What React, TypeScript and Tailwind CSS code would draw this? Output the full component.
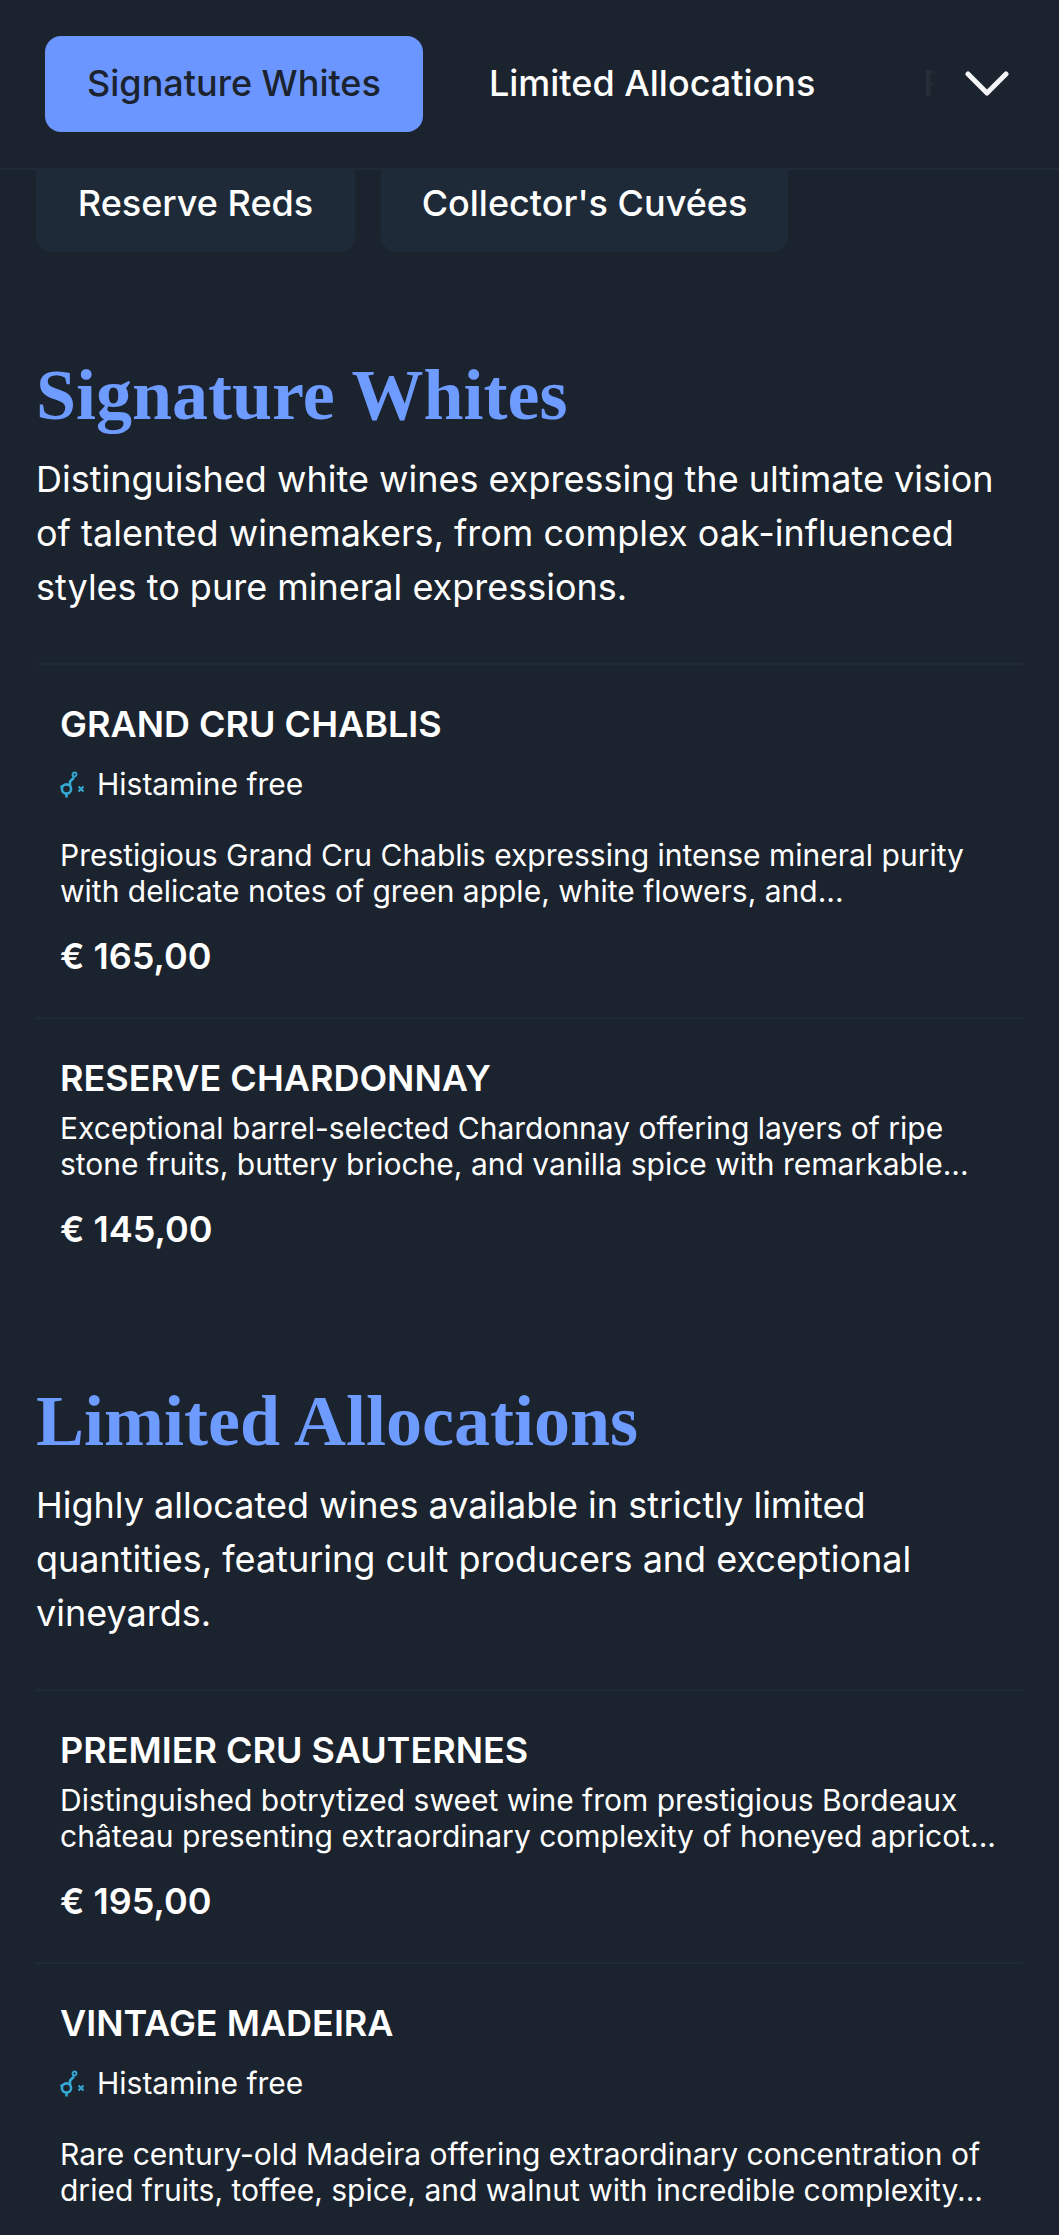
const TABS = ["Signature Whites", "Limited Allocations", "Reserve Reds"];

interface Wine {
  name: string;
  histamine?: boolean;
  description: string[];
  price?: string;
}

interface Section {
  title: string;
  intro: string[];
  wines: Wine[];
}

const SECTIONS: Section[] = [
  {
    title: "Signature Whites",
    intro: [
      "Distinguished white wines expressing the ultimate vision",
      "of talented winemakers, from complex oak-influenced",
      "styles to pure mineral expressions.",
    ],
    wines: [
      {
        name: "GRAND CRU CHABLIS",
        histamine: true,
        description: [
          "Prestigious Grand Cru Chablis expressing intense mineral purity",
          "with delicate notes of green apple, white flowers, and...",
        ],
        price: "€ 165,00",
      },
      {
        name: "RESERVE CHARDONNAY",
        description: [
          "Exceptional barrel-selected Chardonnay offering layers of ripe",
          "stone fruits, buttery brioche, and vanilla spice with remarkable...",
        ],
        price: "€ 145,00",
      },
    ],
  },
  {
    title: "Limited Allocations",
    intro: [
      "Highly allocated wines available in strictly limited",
      "quantities, featuring cult producers and exceptional",
      "vineyards.",
    ],
    wines: [
      {
        name: "PREMIER CRU SAUTERNES",
        description: [
          "Distinguished botrytized sweet wine from prestigious Bordeaux",
          "château presenting extraordinary complexity of honeyed apricot...",
        ],
        price: "€ 195,00",
      },
      {
        name: "VINTAGE MADEIRA",
        histamine: true,
        description: [
          "Rare century-old Madeira offering extraordinary concentration of",
          "dried fruits, toffee, spice, and walnut with incredible complexity...",
        ],
      },
    ],
  },
];

function HistamineIcon() {
  return (
    <svg viewBox="0 0 24 27" className="h-[27px] w-[24px] shrink-0" fill="none" stroke="#35a9d4" strokeWidth="2.6">
      <circle cx="6.5" cy="18" r="4.6" />
      <path d="M6.5 22.5V26.5M2 16l-1.5-1M10 15V10.5l4-4" />
      <circle cx="14.5" cy="3.5" r="2" strokeWidth="1.8" />
      <path d="M18.5 15.5l5 5M23.5 15.5l-5 5" strokeWidth="2" />
    </svg>
  );
}

function WineRow({ wine }: { wine: Wine }) {
  return (
    <div className="border-t-2 border-[#1e2a38] px-6 pt-[37px] pb-[39px]">
      <h3 className="text-[36px] leading-[44px] font-semibold text-white">{wine.name}</h3>
      {wine.histamine ? (
        <div className="mt-[16px] mb-[31px] flex items-center gap-[13px] text-[30px] leading-[44px] text-white">
          <HistamineIcon />
          Histamine free
        </div>
      ) : (
        <div className="h-[10px]" />
      )}
      <p className="text-[30px] leading-[36px] text-white">
        {wine.description.map((line) => (
          <span key={line} className="block whitespace-nowrap">
            {line}
          </span>
        ))}
      </p>
      {wine.price && <p className="mt-[25px] text-[36px] leading-[44px] font-semibold text-white">{wine.price}</p>}
    </div>
  );
}

export default function App() {
  return (
    <div className="h-[2235px] w-[1059px] overflow-hidden bg-[#1b232e] font-['Inter',sans-serif]">
      {/* Sticky category bar */}
      <div className="relative z-10 flex h-[170px] items-center border-b-2 border-[#1e2a38] bg-[#1b232e] pl-[45px]">
        <div className="relative flex w-[905px] gap-[24px] overflow-hidden">
          {TABS.map((tab, i) => (
            <span
              key={tab}
              className={`flex h-[96px] shrink-0 items-center rounded-[16px] px-[42px] pb-[2px] text-[36px] font-medium whitespace-nowrap ${
                i === 0 ? "bg-[#6c96ff] text-[#1b232e]" : "text-white"
              }`}
            >
              {tab}
            </span>
          ))}
          <div className="absolute inset-y-0 right-0 w-[50px] bg-gradient-to-r from-[#1b232e]/80 to-[#1b232e] to-75%" />
        </div>
        <svg viewBox="0 0 44 26" className="ml-[15px] h-[26px] w-[44px]" fill="none" stroke="#f4f5f7" strokeWidth="5" strokeLinecap="round" strokeLinejoin="round">
          <path d="M3 3l19 19L41 3" />
        </svg>
      </div>

      {/* Categories that scrolled under the bar */}
      <div className="-mt-[14px] flex gap-[26px] pl-[36px]">
        <span className="flex h-[96px] w-[319px] items-center justify-center rounded-[16px] bg-[#1e2a38] pb-[2px] text-[36px] font-medium text-white">Reserve Reds</span>
        <span className="flex h-[96px] w-[407px] items-center justify-center rounded-[16px] bg-[#1e2a38] pb-[2px] text-[36px] font-medium text-white">Collector's Cuvées</span>
      </div>

      <main className="px-[36px] pt-[100px]">
        {SECTIONS.map((section) => (
          <section key={section.title} className="mb-[88px]">
            <h2 className="font-['Liberation_Serif',serif] text-[72px] leading-[86px] font-bold text-[#6e9bff]">{section.title}</h2>
            <p className="mt-[14px] mb-[49px] text-[36px] leading-[54px] text-white">
              {section.intro.map((line) => (
                <span key={line} className="block whitespace-nowrap">
                  {line}
                </span>
              ))}
            </p>
            {section.wines.map((wine) => (
              <WineRow key={wine.name} wine={wine} />
            ))}
          </section>
        ))}
      </main>
    </div>
  );
}
